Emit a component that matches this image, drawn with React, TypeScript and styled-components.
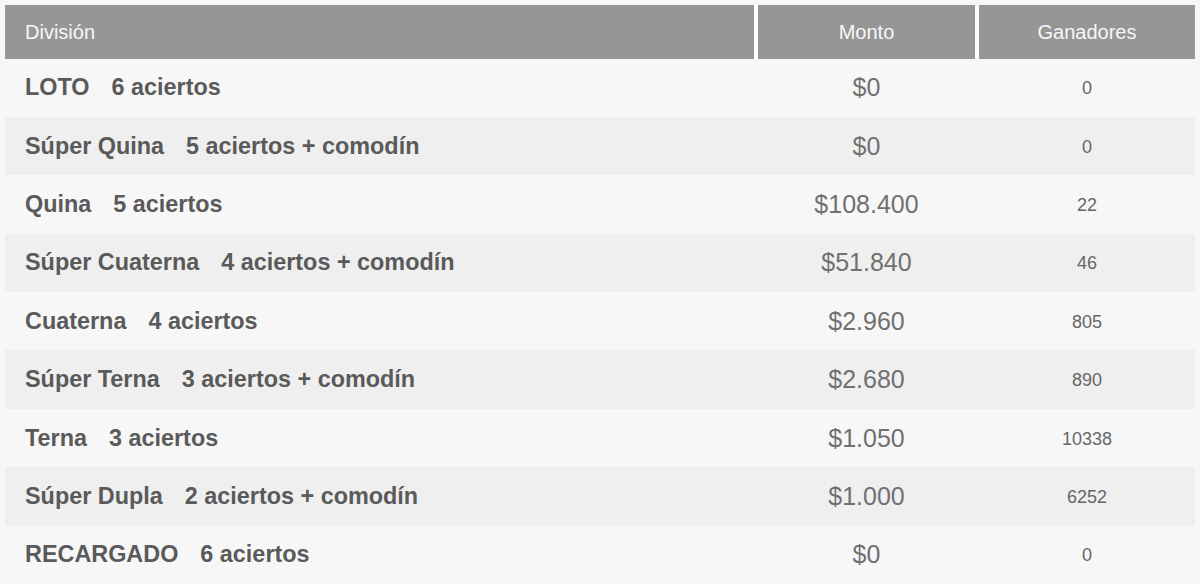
import styled, { createGlobalStyle } from "styled-components";

interface Premio {
  nombre: string;
  aciertos: string;
  monto: string;
  ganadores: string;
}

const premios: Premio[] = [
  { nombre: "LOTO", aciertos: "6 aciertos", monto: "$0", ganadores: "0" },
  { nombre: "Súper Quina", aciertos: "5 aciertos + comodín", monto: "$0", ganadores: "0" },
  { nombre: "Quina", aciertos: "5 aciertos", monto: "$108.400", ganadores: "22" },
  { nombre: "Súper Cuaterna", aciertos: "4 aciertos + comodín", monto: "$51.840", ganadores: "46" },
  { nombre: "Cuaterna", aciertos: "4 aciertos", monto: "$2.960", ganadores: "805" },
  { nombre: "Súper Terna", aciertos: "3 aciertos + comodín", monto: "$2.680", ganadores: "890" },
  { nombre: "Terna", aciertos: "3 aciertos", monto: "$1.050", ganadores: "10338" },
  { nombre: "Súper Dupla", aciertos: "2 aciertos + comodín", monto: "$1.000", ganadores: "6252" },
  { nombre: "RECARGADO", aciertos: "6 aciertos", monto: "$0", ganadores: "0" },
];

const GlobalStyle = createGlobalStyle`
  html, body {
    margin: 0;
    padding: 0;
    background: #f7f7f7;
    font-family: "Liberation Sans", Arial, sans-serif;
  }
`;

const Wrapper = styled.div`
  padding: 5px 5px 0 5px;
  width: 1190px;
`;

const HeaderRow = styled.div`
  display: grid;
  grid-template-columns: 749px 217px 216px;
  column-gap: 4px;
  background: #ffffff;
  height: 53.5px;
`;

const HeadCell = styled.div<{ $center?: boolean }>`
  background: #969696;
  color: #f7f7f7;
  font-size: 20px;
  display: flex;
  align-items: center;
  justify-content: ${(p) => (p.$center ? "center" : "flex-start")};
  padding-left: ${(p) => (p.$center ? "0" : "20px")};
  padding-top: 1px;
`;

const Row = styled.div<{ $shaded: boolean }>`
  display: grid;
  grid-template-columns: 749px 217px 216px;
  column-gap: 4px;
  height: 58.4px;
  align-items: center;
  background: ${(p) => (p.$shaded ? "#efefef" : "#f7f7f7")};
`;

const Division = styled.div`
  padding-left: 20px;
  font-size: 23.4px;
  font-weight: bold;
  color: #5a5a5a;
`;

const Aciertos = styled.span`
  margin-left: 22px;
`;

const Monto = styled.div`
  text-align: center;
  font-size: 25px;
  color: #707070;
`;

const Ganadores = styled.div`
  text-align: center;
  font-size: 18px;
  color: #666666;
  padding-top: 2px;
`;

export default function App() {
  return (
    <>
      <GlobalStyle />
      <Wrapper>
        <HeaderRow>
          <HeadCell>División</HeadCell>
          <HeadCell $center>Monto</HeadCell>
          <HeadCell $center>Ganadores</HeadCell>
        </HeaderRow>
        {premios.map((p, i) => (
          <Row key={p.nombre} $shaded={i % 2 === 1}>
            <Division>
              {p.nombre}
              <Aciertos>{p.aciertos}</Aciertos>
            </Division>
            <Monto>{p.monto}</Monto>
            <Ganadores>{p.ganadores}</Ganadores>
          </Row>
        ))}
      </Wrapper>
    </>
  );
}
